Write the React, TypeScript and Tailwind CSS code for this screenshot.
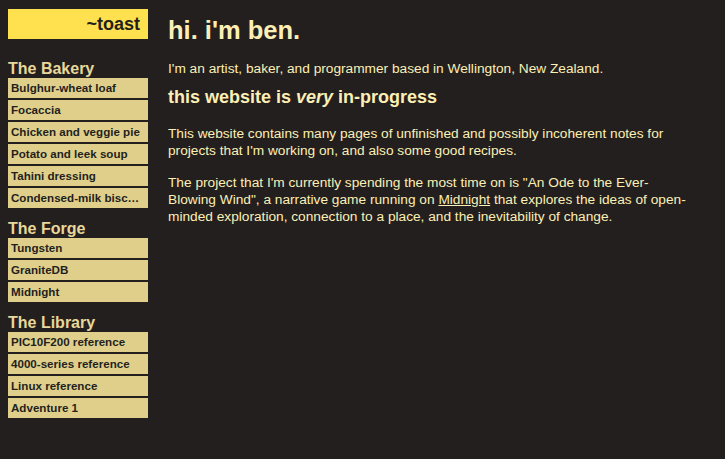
const sections = [
  {
    title: "The Bakery",
    items: [
      "Bulghur-wheat loaf",
      "Focaccia",
      "Chicken and veggie pie",
      "Potato and leek soup",
      "Tahini dressing",
      "Condensed-milk biscuits",
    ],
  },
  { title: "The Forge", items: ["Tungsten", "GraniteDB", "Midnight"] },
  {
    title: "The Library",
    items: ["PIC10F200 reference", "4000-series reference", "Linux reference", "Adventure 1"],
  },
];

export default function App() {
  return (
    <div
      className="min-h-[459px] w-full bg-[#231f1e] text-[#fbefb5] flex gap-5 pl-2 pt-[9px]"
      style={{ fontFamily: '"Liberation Sans", Arial, sans-serif' }}
    >
      <nav className="w-[140px] shrink-0 flex flex-col">
        <div className="h-[30px] bg-[#ffe14f] text-[#231f1e] font-bold text-[18px] flex items-center justify-end pr-2">
          ~toast
        </div>
        {sections.map((s, i) => (
          <div key={s.title} className={i === 0 ? "flex flex-col mt-[20px]" : "flex flex-col mt-[11px]"}>
            <h3 className="font-bold text-[16px] leading-[19px] text-[#e8d89a]">{s.title}</h3>
            <ul className="flex flex-col gap-[2px]">
              {s.items.map((it) => (
                <li
                  key={it}
                  className="h-[20px] bg-[#e0cf8a] text-[#231f1e] font-bold text-[11.6px] leading-[20px] pl-[3px] pr-1 truncate"
                >
                  {it}
                </li>
              ))}
            </ul>
          </div>
        ))}
      </nav>
      <main className="flex-1 pr-[34px]">
        <h1 className="font-bold text-[25.5px] leading-[30px] mt-[6px]">hi. i'm ben.</h1>
        <p className="text-[13.7px] leading-[17px] mt-[15px]">
          I'm an artist, baker, and programmer based in Wellington, New Zealand.
        </p>
        <h2 className="font-bold text-[18px] leading-[21px] mt-[10px]">
          this website is <em>very</em> in-progress
        </h2>
        <p className="text-[13.7px] leading-[17px] mt-[17px]">
          This website contains many pages of unfinished and possibly incoherent notes for projects that I'm working
          on, and also some good recipes.
        </p>
        <p className="text-[13.7px] leading-[17px] mt-[15px]">
          The project that I'm currently spending the most time on is "An Ode to the Ever-Blowing Wind", a narrative
          game running on <a className="underline">Midnight</a> that explores the ideas of open-minded exploration,
          connection to a place, and the inevitability of change.
        </p>
      </main>
    </div>
  );
}
